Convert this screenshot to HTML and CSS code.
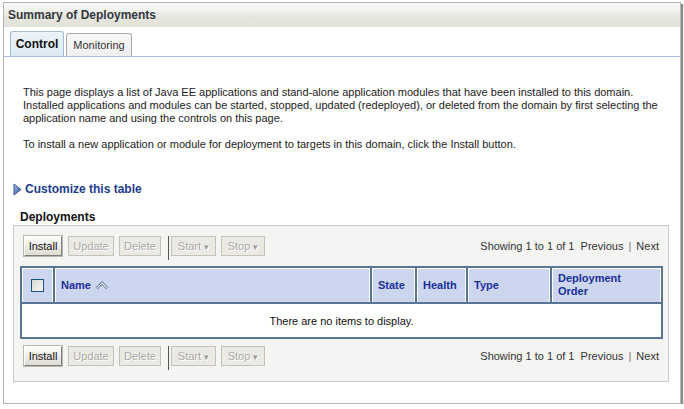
FILE: index.html
```html
<!DOCTYPE html>
<html lang="en">
<head>
  <meta charset="UTF-8">
  <title>Summary of Deployments</title>
  <link rel="stylesheet" href="styles.css">
</head>
<body>

<div class="frame">
  <div class="title-bar">Summary of Deployments</div>

  <div class="tabs">
    <div class="tab active">Control</div>
    <div class="tab">Monitoring</div>
  </div>

  <div class="content">
    <p class="intro">This page displays a list of Java EE applications and stand-alone application modules that have been installed to this domain. Installed applications and modules can be started, stopped, updated (redeployed), or deleted from the domain by first selecting the application name and using the controls on this page.</p>
    <p class="intro second">To install a new application or module for deployment to targets in this domain, click the Install button.</p>

    <div class="customize">
      <svg width="9" height="13" viewBox="0 0 9 13">
        <defs>
          <linearGradient id="tri" x1="0" y1="0" x2="1" y2="1">
            <stop offset="0" stop-color="#a9bde8"/>
            <stop offset="1" stop-color="#2d4e9e"/>
          </linearGradient>
        </defs>
        <polygon points="1,1 8,6.5 1,12" fill="url(#tri)" stroke="#3a5697" stroke-width="1"/>
      </svg>
      <span>Customize this table</span>
    </div>

    <div class="section-title">Deployments</div>

    <div class="panel">
      <div class="toolbar">
        <button class="btn install">Install</button>
        <button class="btn off w-update">Update</button>
        <button class="btn off w-delete">Delete</button>
        <span class="sep"></span>
        <button class="btn off w-start">Start <span class="caret">&#9662;</span></button>
        <button class="btn off w-stop">Stop <span class="caret">&#9662;</span></button>
        <div class="paging">Showing 1 to 1 of 1 &nbsp;Previous <span class="bar">|</span> Next</div>
      </div>

      <table class="grid">
        <thead>
          <tr>
            <th class="c-check"><span class="checkbox"></span></th>
            <th class="c-name">Name
              <svg class="sort" width="14" height="9" viewBox="0 0 14 9">
                <path d="M1.5 7.5 L7 2 L12.5 7.5" stroke="#8194b5" stroke-width="3" fill="none" stroke-linejoin="miter"/>
                <path d="M1.5 7.5 L7 2 L12.5 7.5" stroke="#eef2f9" stroke-width="1" fill="none"/>
              </svg>
            </th>
            <th class="c-state">State</th>
            <th class="c-health">Health</th>
            <th class="c-type">Type</th>
            <th class="c-order">Deployment<br>Order</th>
          </tr>
        </thead>
        <tbody>
          <tr>
            <td colspan="6" class="empty">There are no items to display.</td>
          </tr>
        </tbody>
      </table>

      <div class="toolbar bottom">
        <button class="btn install">Install</button>
        <button class="btn off w-update">Update</button>
        <button class="btn off w-delete">Delete</button>
        <span class="sep"></span>
        <button class="btn off w-start">Start <span class="caret">&#9662;</span></button>
        <button class="btn off w-stop">Stop <span class="caret">&#9662;</span></button>
        <div class="paging">Showing 1 to 1 of 1 &nbsp;Previous <span class="bar">|</span> Next</div>
      </div>
    </div>
  </div>
</div>

</body>
</html>
```

FILE: styles.css
```css
* {
  box-sizing: border-box;
}
body {
  margin: 0;
  background: #fff;
  font-family: "Liberation Sans", Arial, sans-serif;
  font-size: 11px;
  color: #222;
}
.frame {
  margin: 2px 0 0 3px;
  width: 678px;
  height: 402px;
  border: 1px solid #b4b4b4;
  box-shadow: 2px 2px 1px #8c8c8c;
  background: #fff;
}
.title-bar {
  height: 24px;
  line-height: 25px;
  padding-left: 4px;
  font-size: 12px;
  font-weight: bold;
  color: #33383f;
  background: linear-gradient(#fbfbfa 0%, #f1f1ee 30%, #e6e5dd 60%, #e4e3da 100%);
}
.tabs {
  display: flex;
  align-items: flex-end;
  height: 30px;
  padding-left: 6px;
  border-bottom: 1px solid #a7bfdf;
}
.tab {
  height: 23px;
  width: 66px;
  margin-left: 2px;
  border: 1px solid #aaa;
  border-bottom: none;
  border-radius: 3px 3px 0 0;
  background: linear-gradient(#f8f8f8, #efefef);
  color: #333;
  text-align: center;
  line-height: 22px;
}
.tab.active {
  height: 25px;
  width: 54px;
  margin-left: 0;
  border-color: #a3bbd9;
  background: linear-gradient(#edf4fa, #dce9f4);
  color: #111;
  font-weight: bold;
  font-size: 12px;
  line-height: 25px;
}
.content {
  padding: 0 11px 0 9px;
}
.intro {
  margin: 29px 0 0 10px;
  line-height: 13px;
  padding-right: 4px;
}
.intro.second {
  margin-top: 13px;
}
.customize {
  display: flex;
  align-items: center;
  gap: 3px;
  margin-top: 31px;
  height: 14px;
  font-size: 12px;
  font-weight: bold;
  color: #1d3c8e;
}
.section-title {
  margin: 14px 0 0 7px;
  height: 14px;
  line-height: 14px;
  font-size: 12px;
  font-weight: bold;
  color: #111;
}
.panel {
  margin-top: 1px;
  border: 1px solid #cbcbc8;
  background: #f4f4f2;
  padding: 0 6px 11px 6px;
}
.toolbar {
  display: flex;
  align-items: flex-start;
  padding: 10px 3px 0 4px;
}
.toolbar.bottom {
  padding-top: 7px;
}
.btn {
  height: 20px;
  margin-right: 5px;
  padding: 0;
  font-family: inherit;
  font-size: 11px;
  border: 1px solid #c6c2b8;
  background: #ebe9e3;
  color: #a9a9a9;
  text-shadow: 1px 1px 0 #fff;
}
.btn.install {
  width: 38px;
  margin-right: 6px;
  color: #111;
  text-shadow: none;
  border-color: #fff #7f7f7f #7f7f7f #fff;
  background: linear-gradient(#fdfdfc, #dedcd2);
  box-shadow: 0 0 0 1px #b8b8b0;
}
.w-update { width: 46px; }
.w-delete { width: 42px; margin-right: 7px; }
.w-start { width: 45px; }
.w-stop { width: 44px; }
.caret {
  font-size: 9px;
  color: #9a9a9a;
}
.sep {
  width: 1px;
  height: 24px;
  background: #555;
  margin-right: 2px;
}
.paging {
  margin-left: auto;
  line-height: 20px;
  color: #333;
}
.bar {
  color: #777;
  padding: 0 2px;
}
.grid {
  width: 641px;
  margin-top: 6px;
  table-layout: fixed;
  border-collapse: separate;
  border-spacing: 0;
  border: 2px solid #587595;
  background: #fff;
}
.grid th {
  height: 36px;
  padding: 0 0 0 6px;
  text-align: left;
  vertical-align: middle;
  font-size: 11px;
  font-weight: bold;
  color: #1b2f9c;
  line-height: 13px;
  background: #ccd6ee;
  border-left: 2px solid #587595;
  border-bottom: 2px solid #587595;
  box-shadow: inset 1px 1px 0 #fff, inset -1px 0 0 #fff;
}
.grid th.c-check {
  border-left: none;
  width: 31px;
  padding: 0;
  text-align: center;
}
.c-name { width: 317px; }
.c-state { width: 45px; }
.c-health { width: 51px; }
.c-type { width: 84px; }
.c-order { width: 111px; }
.checkbox {
  display: inline-block;
  width: 13px;
  height: 13px;
  margin-top: 3px;
  border: 1px solid #1c5180;
  background: linear-gradient(135deg, #d8d8d2, #f8f8f6);
}
.sort {
  vertical-align: -1px;
  margin-left: 1px;
}
.empty {
  height: 33px;
  text-align: center;
  color: #111;
  padding: 0;
}
```
